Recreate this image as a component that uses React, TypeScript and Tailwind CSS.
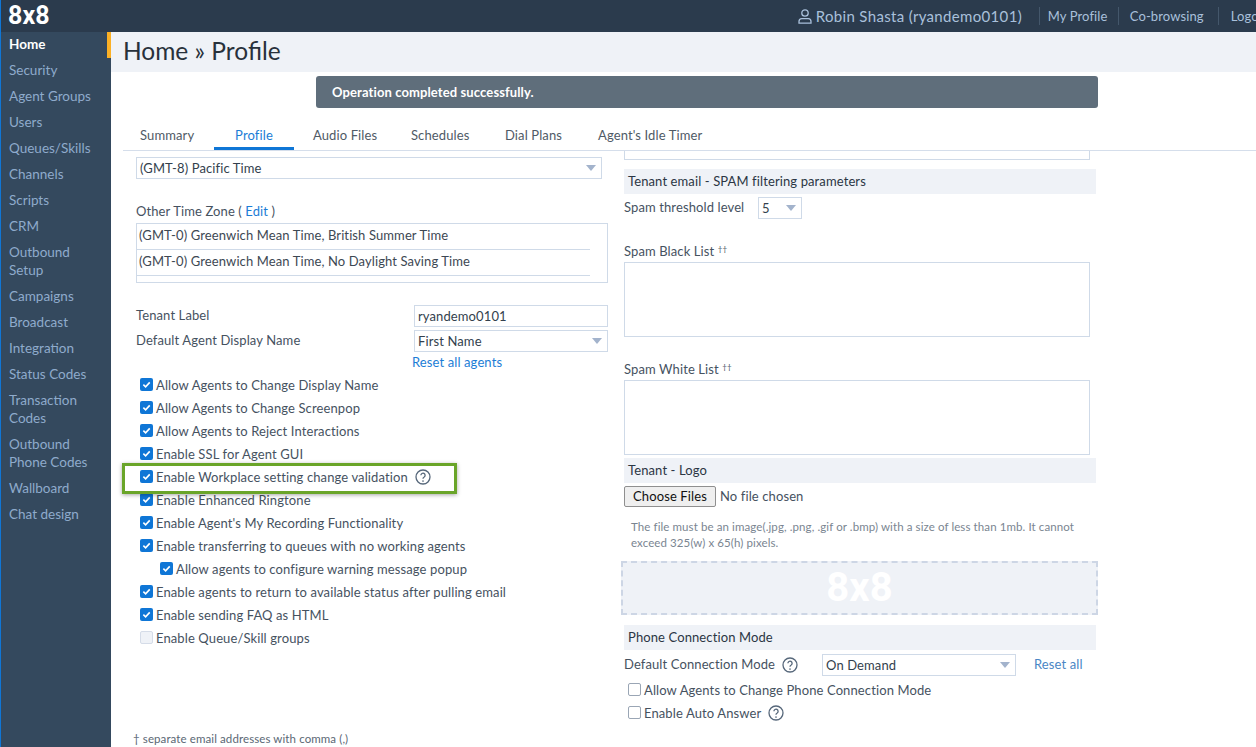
import React from "react";

const NAV: { label: string; lines?: boolean }[] = [
  { label: "Home" }, { label: "Security" }, { label: "Agent Groups" }, { label: "Users" }, { label: "Queues/Skills" }, { label: "Channels" }, { label: "Scripts" }, { label: "CRM" },
  { label: "Outbound Setup", lines: true }, { label: "Campaigns" }, { label: "Broadcast" }, { label: "Integration" }, { label: "Status Codes" },
  { label: "Transaction Codes", lines: true }, { label: "Outbound Phone Codes", lines: true }, { label: "Wallboard" }, { label: "Chat design" },
];

const TABS = [
  { t: "Summary", c: "w-[91px] pl-[17px]" },
  { t: "Profile", c: "w-[80px] text-center text-[#1b7dd6] border-b-[3px] border-[#0f76d6]" },
  { t: "Audio Files", c: "w-[117px] pl-[19px]" },
  { t: "Schedules", c: "w-[94px]" },
  { t: "Dial Plans", c: "w-[93px]" },
  { t: "Agent's Idle Timer", c: "" },
];

function Check({ on, muted }: { on?: boolean; muted?: boolean }) {
  if (on) {
    return (
      <span className="w-[13px] h-[13px] rounded-[2px] bg-[#0f76d6] flex items-center justify-center shrink-0">
        <svg width="9" height="9" viewBox="0 0 10 10" fill="none"><path d="M1.5 5.2 L4 7.6 L8.6 2.6" stroke="#fff" strokeWidth="1.8" /></svg>
      </span>
    );
  }
  return <span className={`w-[13px] h-[13px] rounded-[2px] border shrink-0 ${muted ? "border-[#d5dce8] bg-[#eff2f7]" : "border-[#9aa6b5] bg-white"}`} />;
}

function Help({ size = 16 }: { size?: number }) {
  return (
    <svg width={size} height={size} viewBox="0 0 16 16" fill="none" className="shrink-0">
      <circle cx="8" cy="8" r="7" stroke="#56677a" strokeWidth="1.3" />
      <path d="M5.9 6.2a2.1 2.1 0 1 1 3.3 1.8c-.8.5-1.2.9-1.2 1.8" stroke="#56677a" strokeWidth="1.3" />
      <circle cx="8" cy="12" r=".85" fill="#56677a" />
    </svg>
  );
}

function Caret() {
  return <span className="w-0 h-0 border-l-[5px] border-r-[5px] border-t-[6px] border-l-transparent border-r-transparent border-t-[#a3b3cc] shrink-0" />;
}

function Select({ label, className, textClass = "" }: { label: string; className: string; textClass?: string }) {
  return (
    <div className={`h-[22px] border border-[#cfdae8] flex items-center justify-between pl-[3px] pr-[5px] text-[#333f4d] bg-white ${className}`}>
      <span className={textClass}>{label}</span>
      <Caret />
    </div>
  );
}

function Row({ label, on, muted, indent, help }: { label: string; on?: boolean; muted?: boolean; indent?: boolean; help?: boolean }) {
  return (
    <div className={`h-[23px] flex items-center gap-[3px] ${indent ? "pl-[20px]" : ""}`}>
      <Check on={on} muted={muted} />
      <span>{label}</span>
      {help && <span className="ml-[4px] flex"><Help /></span>}
    </div>
  );
}

function Header({ children, className = "" }: { children: React.ReactNode; className?: string }) {
  return <div className={`h-[25px] bg-[#eff2f7] pl-[4px] pb-[1px] flex items-center w-[472px] text-[#2b3644] ${className}`}>{children}</div>;
}

export default function App() {
  return (
    <div className="w-[1256px] h-[747px] overflow-hidden flex flex-col bg-white text-[13px] tracking-[0.11px] text-[#46525f] leading-[18px] font-['Lato',sans-serif]">
      <header className="h-[32px] shrink-0 bg-[#2b3b4d] border-l border-[#0f76d6] flex items-center overflow-hidden">
        <span className="w-[48px] ml-[7px] text-white font-bold text-[25px] leading-[32px] font-['Roboto',sans-serif]">8x8</span>
        <div className="ml-[747px] flex items-center text-[#a9c0db] shrink-0">
          <svg width="16" height="17" viewBox="0 0 16 17" fill="none" stroke="#a9c0db" strokeWidth="1.3" className="w-[16px]">
            <circle cx="8" cy="5" r="3.2" />
            <path d="M2 15.2v-1.7c0-1.6 1.2-2.9 2.8-2.9h6.4c1.6 0 2.8 1.3 2.8 2.9v1.7z" />
          </svg>
          <span className="ml-[3px] w-[223px] text-[15px] tracking-[0.33px]">Robin Shasta (ryandemo0101)</span>
          <span className="w-px h-[18px] bg-[#44576b]" />
          <span className="ml-[8px] w-[70px]">My Profile</span>
          <span className="w-px h-[18px] bg-[#44576b]" />
          <span className="ml-[11px] w-[88px]">Co-browsing</span>
          <span className="w-px h-[18px] bg-[#44576b]" />
          <span className="ml-[12px]">Logout</span>
        </div>
      </header>
      <div className="flex flex-1 min-h-0">
        <nav className="w-[111px] shrink-0 bg-[#34495e] border-l border-[#0f76d6] relative pl-[8px] text-[#8fabcc] text-[13.5px] tracking-normal">
          <span className="absolute right-0 top-0 w-[4px] h-[26px] bg-[#fbb025]" />
          {NAV.map((n, i) => (
            <div key={n.label} className={`${n.lines ? "pt-[3px] pb-[5px] w-[95px]" : "h-[26px] pb-[2px] flex items-center"} ${i === 0 ? "text-white font-bold" : ""}`}>{n.label}</div>
          ))}
        </nav>
        <main className="flex-1 min-w-0 relative">
          <div className="h-[40px] bg-[#eff2f7] pl-[12px] text-[24.5px] leading-[37px] tracking-normal text-[#28313b]">Home » Profile</div>
          <div className="mt-[4px] ml-[205px] w-[782px] h-[32px] rounded-[3px] bg-[#5f6e7b] text-white font-bold pl-[16px] pb-[1px] flex items-center">Operation completed successfully.</div>
          <div className="mt-[12px] ml-[12px] h-[31px] border-b border-[#d5deeb] flex text-[#4f5a66]">
            {TABS.map((t) => (
              <div key={t.t} className={`h-[30px] pt-[6px] ${t.c}`}>{t.t}</div>
            ))}
          </div>
          <div className="flex pl-[25px]">
            <section className="w-[488px] shrink-0 pt-[6px]">
              <Select label="(GMT-8) Pacific Time" className="w-[466px]" />
              <div className="mt-[23px]">Other Time Zone ( <span className="text-[#1b7dd6]">Edit</span> )</div>
              <div className="mt-[3px] w-[472px] h-[60px] border border-[#cfdae8] text-[#3d4853]">
                <div className="w-[453px] h-[26px] border-b border-[#cfdae8] pl-[2px] pb-[3px] flex items-center">(GMT-0) Greenwich Mean Time, British Summer Time</div>
                <div className="w-[453px] h-[26px] border-b border-[#cfdae8] pl-[2px] pb-[3px] flex items-center">(GMT-0) Greenwich Mean Time, No Daylight Saving Time</div>
              </div>
              <div className="mt-[22px] w-[472px] flex justify-between">
                <span className="mt-[1px]">Tenant Label</span>
                <div className="w-[194px] h-[22px] border border-[#cfdae8] pl-[3px] pb-[1px] flex items-center text-[#333f4d]">ryandemo0101</div>
              </div>
              <div className="mt-[3px] w-[472px] flex justify-between">
                <span className="mt-[1px]">Default Agent Display Name</span>
                <Select label="First Name" className="w-[194px]" />
              </div>
              <div className="ml-[276px] mt-[1px] text-[#1b7dd6]">Reset all agents</div>
              <div className="mt-[2px] ml-[4px] text-[#46525f]">
                <Row on label="Allow Agents to Change Display Name" />
                <Row on label="Allow Agents to Change Screenpop" />
                <Row on label="Allow Agents to Reject Interactions" />
                <Row on label="Enable SSL for Agent GUI" />
                <Row on label="Enable Workplace setting change validation" help />
                <Row on label="Enable Enhanced Ringtone" />
                <Row on label="Enable Agent's My Recording Functionality" />
                <Row on label="Enable transferring to queues with no working agents" />
                <Row on indent label="Allow agents to configure warning message popup" />
                <Row on label="Enable agents to return to available status after pulling email" />
                <Row on label="Enable sending FAQ as HTML" />
                <Row muted label="Enable Queue/Skill groups" />
              </div>
              <div className="mt-[81px] -ml-[3px] text-[11.5px] tracking-[0.1px] text-[#5a6774]">† separate email addresses with comma (,)</div>
            </section>
            <section className="flex-1 min-w-0">
              <div className="w-[466px] h-[9px] border-b border-x border-[#cfdae8]" />
              <Header className="mt-[9px]">Tenant email - SPAM filtering parameters</Header>
              <div className="mt-[3px] flex">
                <span className="mt-[1px] w-[134px]">Spam threshold level</span>
                <Select label="5" className="w-[44px]" />
              </div>
              <div className="mt-[23px]">Spam Black List <sup className="text-[8px]">††</sup></div>
              <div className="mt-[2px] w-[466px] h-[75px] border border-[#cfdae8]" />
              <div className="mt-[23px]">Spam White List <sup className="text-[8px]">††</sup></div>
              <div className="mt-[2px] w-[466px] h-[75px] border border-[#cfdae8]" />
              <Header className="mt-[3px]">Tenant - Logo</Header>
              <div className="mt-[3px] flex items-center">
                <span className="w-[92px] h-[21px] border border-[#8f8f8f] rounded-[2px] bg-[#efefef] text-[#111] pb-[2px] flex items-center justify-center">Choose Files</span>
                <span className="ml-[4px] mb-[1px]">No file chosen</span>
              </div>
              <div className="mt-[12px] ml-[7px] w-[450px] text-[11.5px] tracking-[0.1px] leading-[16px] text-[#7a8591]">The file must be an image(.jpg, .png, .gif or .bmp) with a size of less than 1mb. It cannot exceed 325(w) x 65(h) pixels.</div>
              <div className="mt-[10px] -ml-[3px] w-[477px] h-[54px] bg-[#eff2f7] border-2 border-dashed border-[#cdd6e5] flex items-center justify-center text-white font-bold text-[40px] font-['Roboto',sans-serif]">8x8</div>
              <Header className="mt-[10px]">Phone Connection Mode</Header>
              <div className="mt-[4px] flex items-center">
                <span className="w-[158px] mb-[2px]">Default Connection Mode</span>
                <span className="w-[40px] flex"><Help /></span>
                <Select label="On Demand" className="w-[194px]" />
                <span className="ml-[18px] mb-[2px] text-[#4a86c5]">Reset all</span>
              </div>
              <div className="mt-[2px] ml-[4px]">
                <Row label="Allow Agents to Change Phone Connection Mode" />
                <Row label="Enable Auto Answer" help />
              </div>
            </section>
          </div>
          <div className="absolute left-[11px] top-[431px] w-[335px] h-[31px] border-[3px] border-[#6aa529] shadow-[0_1px_4px_rgba(0,0,0,0.35)]" />
        </main>
      </div>
    </div>
  );
}
